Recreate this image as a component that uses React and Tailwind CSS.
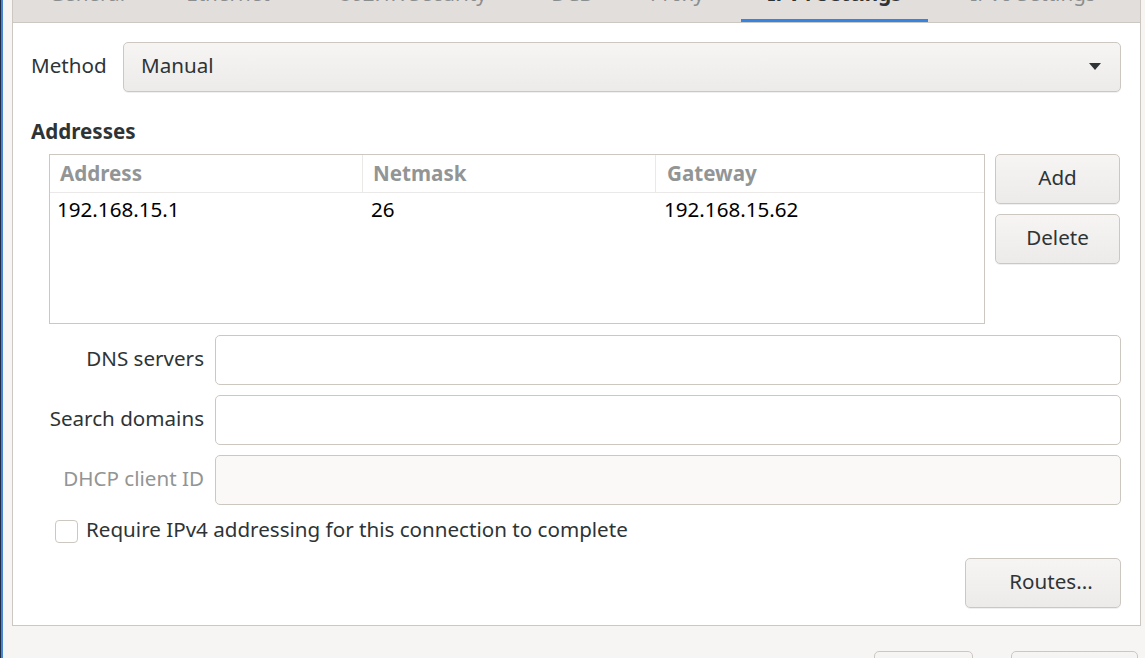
import React, { useState } from "react";

const font = { fontFamily: '"Noto Sans", "Open Sans", sans-serif' };

const tabs = [
  { label: "General", w: "w-[148px]" },
  { label: "Ethernet", w: "w-[134px]" },
  { label: "802.1X Security", w: "w-[236px]" },
  { label: "DCB", w: "w-[82px]" },
  { label: "Proxy", w: "w-[128px]" },
  { label: "IPv4 Settings", w: "w-[187px]", active: true },
  { label: "IPv6 Settings", w: "w-[210px]" },
];

function GtkButton({ children, className = "" }) {
  return (
    <button
      type="button"
      className={
        "shrink-0 h-[50px] pb-[4px] rounded-[5px] border border-[#cdc7c2] bg-linear-to-b from-[#f6f5f4] to-[#edebe9] text-[20.6px] text-[#2e3436] shadow-[0_1px_0_rgba(0,0,0,0.06)] " +
        className
      }
    >
      {children}
    </button>
  );
}

function Field({ label, disabled }) {
  return (
    <div className="flex items-center h-[50px]">
      <div
        className={
          "w-[173px] pb-[4px] text-right text-[20.6px] " +
          (disabled ? "text-[#929595]" : "text-[#2e3436]")
        }
      >
        {label}
      </div>
      <input
        type="text"
        disabled={disabled}
        className={
          "ml-[11px] flex-1 h-[50px] rounded-[5px] border border-[#cdc7c2] outline-none px-3 " +
          (disabled ? "bg-[#faf9f8]" : "bg-white")
        }
      />
    </div>
  );
}

export default function App() {
  const [required, setRequired] = useState(false);

  return (
    <div className="w-[1145px] h-[658px] overflow-hidden flex bg-[#f6f5f4]" style={font}>
      {/* window edge behind the dialog */}
      <div className="w-[1px] bg-[#1d2c47]" />
      <div className="w-[2px] bg-[#4a86d0]" />

      <div className="flex-1 flex flex-col pl-[9px] pr-[4px]">
        {/* notebook */}
        <div className="shrink-0 flex flex-col border-x border-b border-[#cdc7c2] bg-white h-[626px]">
          <div className="shrink-0 h-[23px] flex items-end overflow-hidden bg-[#e1dedb] border-b border-[#cdc7c2]">
            {tabs.map((t) => (
              <div
                key={t.label}
                className={
                  "shrink-0 text-center text-[20.6px] leading-[28px] pb-[12px] border-b-[3px] whitespace-nowrap " +
                  t.w +
                  (t.active
                    ? " border-[#3584e4] font-bold text-[#2e3436]"
                    : " border-transparent text-[#8b8e8f]")
                }
              >
                {t.label}
              </div>
            ))}
          </div>

          <div className="flex flex-col pt-[19px] pl-[18px] pr-[19px]">
            {/* Method */}
            <div className="flex items-center h-[50px]">
              <div className="w-[92px] pb-[4px] text-[20.6px] text-[#2e3436]">Method</div>
              <div className="flex-1 h-[50px] flex items-center justify-between rounded-[5px] border border-[#cdc7c2] bg-linear-to-b from-[#f6f5f4] to-[#edebe9] pl-[17px] pr-[19px] shadow-[0_1px_0_rgba(0,0,0,0.06)]">
                <span className="pb-[4px] text-[20.6px] text-[#2e3436]">Manual</span>
                <svg width="12" height="8" viewBox="0 0 12 8">
                  <polygon points="0,0 12,0 6,7" fill="#2e3436" />
                </svg>
              </div>
            </div>

            <div className="mt-[26px] text-[20.6px] leading-[27px] font-bold text-[#2e3436]">Addresses</div>

            {/* address table + buttons */}
            <div className="mt-[9px] ml-[18px] flex gap-[10px]">
              <div className="w-[936px] h-[170px] border border-[#cdc7c2] bg-white">
                <div className="h-[38px] grid grid-cols-[313px_293px_1fr] border-b border-[#ebe9e7] text-[20.6px] font-bold text-[#929595]">
                  <div className="pl-[10px] flex items-center border-r border-[#ebe9e7]">Address</div>
                  <div className="pl-[10px] flex items-center border-r border-[#ebe9e7]">Netmask</div>
                  <div className="pl-[11px] flex items-center">Gateway</div>
                </div>
                <div className="h-[37px] pb-[4px] grid grid-cols-[313px_293px_1fr] text-[20.6px] text-black">
                  <div className="pl-[7px] flex items-center">192.168.15.1</div>
                  <div className="pl-[8px] flex items-center">26</div>
                  <div className="pl-[8px] flex items-center">192.168.15.62</div>
                </div>
              </div>
              <div className="flex flex-col gap-[10px] w-[125px]">
                <GtkButton className="w-full">Add</GtkButton>
                <GtkButton className="w-full">Delete</GtkButton>
              </div>
            </div>

            {/* dns / search / dhcp */}
            <div className="mt-[11px] flex flex-col gap-[10px]">
              <Field label="DNS servers" />
              <Field label="Search domains" />
              <Field label="DHCP client ID" disabled />
            </div>

            <label className="mt-[15px] ml-[24px] flex items-center gap-[8px] h-[23px] cursor-pointer">
              <span
                onClick={() => setRequired(!required)}
                className="shrink-0 w-[23px] h-[23px] rounded-[4px] border border-[#cdc7c2] bg-white flex items-center justify-center"
              >
                {required && (
                  <svg width="14" height="14" viewBox="0 0 14 14">
                    <path d="M2 7 L6 11 L12 3" stroke="#2e3436" strokeWidth="2" fill="none" />
                  </svg>
                )}
              </span>
              <span className="pb-[4px] text-[20.6px] text-[#2e3436] whitespace-nowrap">Require IPv4 addressing for this connection to complete</span>
            </label>

            <div className="mt-[15px] flex justify-end">
              <GtkButton className="w-[156px] pl-[16px]">Routes...</GtkButton>
            </div>
          </div>
        </div>

        {/* dialog action buttons (cut off) */}
        <div className="shrink-0 mt-[25px] flex justify-end gap-[38px] pr-[3px]">
          <GtkButton className="w-[99px]">Cancel</GtkButton>
          <GtkButton className="w-[127px]">Save</GtkButton>
        </div>
      </div>
    </div>
  );
}
